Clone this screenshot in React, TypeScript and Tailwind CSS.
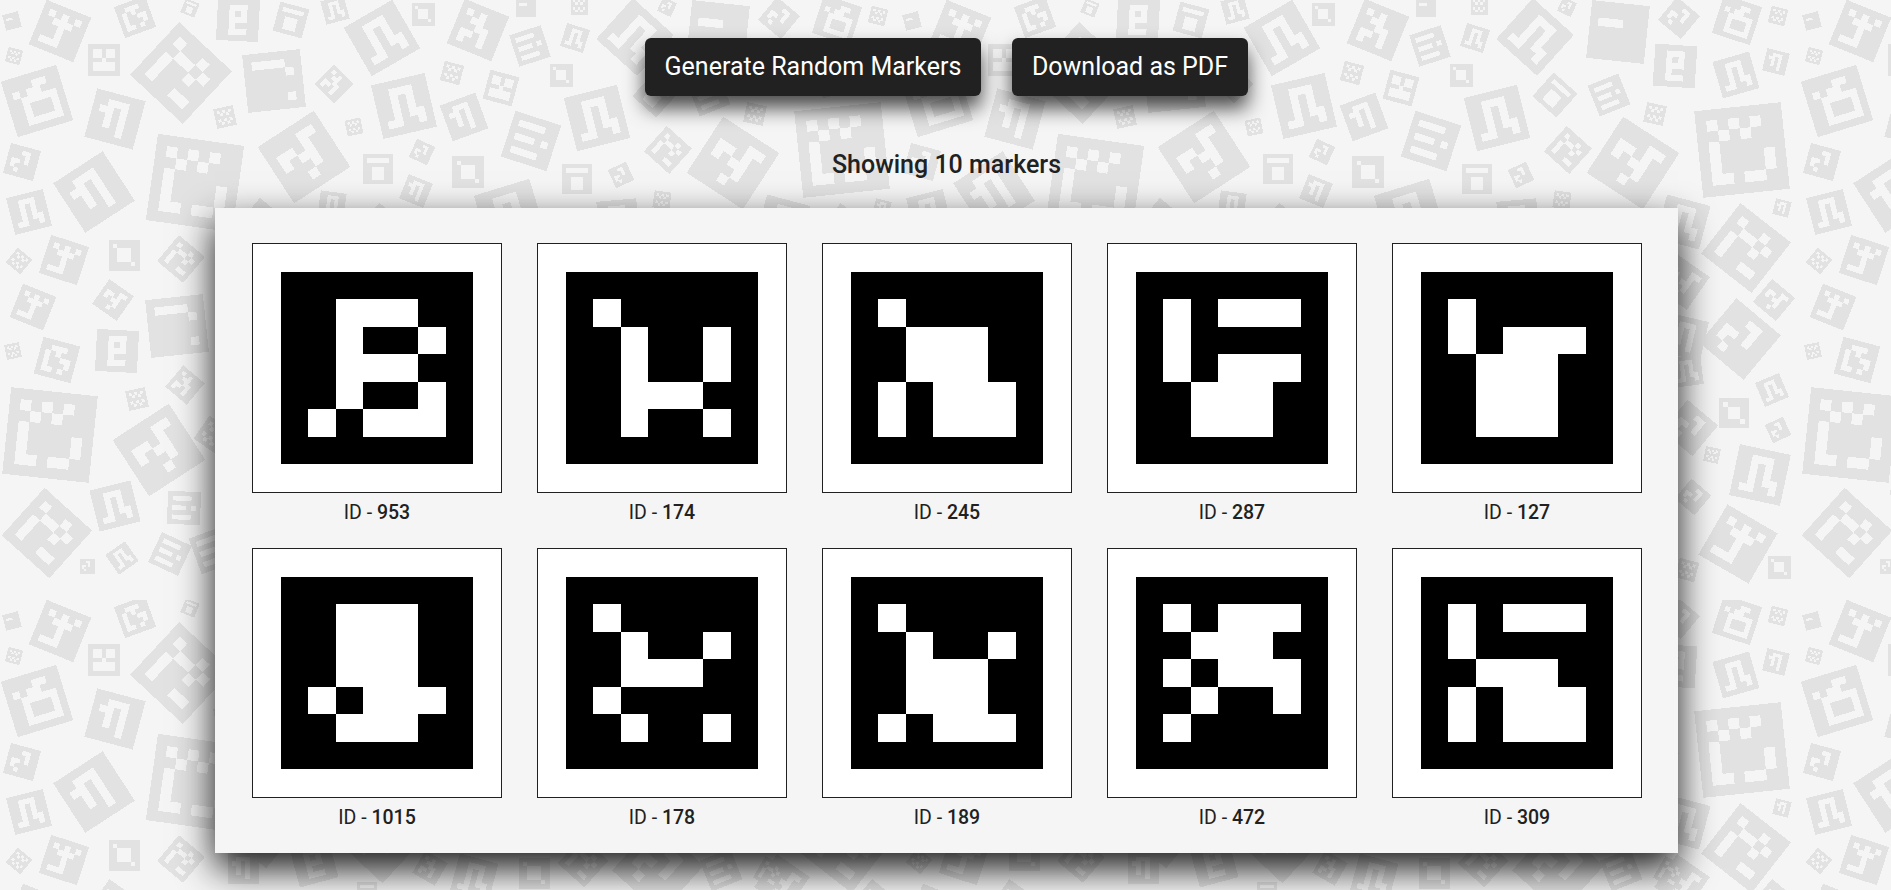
const fontRoboto = "font-['Roboto',sans-serif]";

// printed markers, rows of 5x5 cells, 1 = white
const markers = [
  { id: 953, rows: ['01110', '01001', '01110', '01001', '10111'] },
  { id: 174, rows: ['10000', '01001', '01001', '01110', '01001'] },
  { id: 245, rows: ['10000', '01110', '01110', '10111', '10111'] },
  { id: 287, rows: ['10111', '10000', '10111', '01110', '01110'] },
  { id: 127, rows: ['10000', '10111', '01110', '01110', '01110'] },
  { id: 1015, rows: ['01110', '01110', '01110', '10111', '01110'] },
  { id: 178, rows: ['10000', '01001', '01110', '10000', '01001'] },
  { id: 189, rows: ['10000', '01001', '01110', '01110', '10111'] },
  { id: 472, rows: ['10111', '01110', '10111', '01001', '10000'] },
  { id: 309, rows: ['10111', '10000', '01110', '10111', '10111'] },
];

const P = {
  tee: '10101/01110/00100/00100/11100',
  fork: '01110/10100/10011/10001/11010',
  hash: '01110/01010/01010/01011/11001',
  blob: '01110/01010/01110/01000/01110',
  net: '10010/01101/10010/10000/10011',
  slab: '11110/00001/00000/00000/00001',
  ring: '000110/101100/011111/010001/010001/011111',
  twin: '01110/11010/01010/01010/00010',
  flag: '00011/11010/10110/00010/00100',
  box: '11111/00000/01110/01110/01110',
  core: '10000/01110/01110/01110/00001',
  cross: '11011/11011/00100/11111/11111',
  bars: '11110/00000/11101/00000/11110',
  dots: '10101/01010/00000/10101/01010',
  big: '101010/010100/100000/100001/100001/110110',
  steps: '10100/01100/00110/11010/10010',
  mono: '00000/11100/00000/00000/00000',
  solo: '00110/00010/11010/10000/01000',
};

// background tile, 900x600: cx, cy, size, rotation, pattern
const tile: [number, number, number, number, string][] = [
  [12, 21, 16, -15, P.mono], [60, 31, 48, 22, P.tee], [135, 17, 33, -20, P.fork], [190, 8, 15, 22, P.box],
  [238, 20, 42, 3, P.blob], [291, 20, 30, 15, P.box], [335, 10, 24, -15, P.hash], [382, 38, 56, -30, P.hash],
  [423, 14, 23, 0, P.core], [478, 30, 48, 22, P.steps], [526, 7, 20, 0, P.mono], [579, 6, 17, 0, P.dots],
  [14, 56, 15, 15, P.dots], [104, 60, 32, 0, P.cross], [181, 73, 72, 43, P.net], [274, 81, 58, -6, P.slab],
  [334, 84, 28, 45, P.steps], [404, 106, 55, -13, P.hash], [452, 73, 20, 15, P.dots], [501, 88, 30, 15, P.cross],
  [530, 46, 33, -18, P.bars], [575, 38, 24, 18, P.hash], [561, 75, 23, 0, P.core], [597, 118, 55, -14, P.hash],
  [464, 117, 38, -20, P.twin], [531, 141, 48, 18, P.bars], [37, 101, 58, -17, P.ring], [115, 119, 50, 15, P.twin],
  [225, 117, 20, -12, P.dots], [354, 127, 16, -12, P.dots], [304, 157, 67, -33, P.flag], [22, 162, 31, 15, P.solo],
  [195, 183, 87, 8, P.big], [94, 192, 59, -33, P.twin], [29, 212, 38, -14, P.hash], [64, 260, 40, 18, P.tee],
  [124, 255, 31, 0, P.core], [181, 259, 34, 40, P.net], [19, 261, 19, 40, P.dots], [378, 169, 30, 0, P.box],
  [422, 152, 20, 25, P.solo], [468, 172, 32, 0, P.core], [416, 191, 26, 22, P.twin], [577, 179, 30, 0, P.box],
  [621, 175, 20, -25, P.solo], [332, 205, 26, 8, P.hash], [510, 215, 58, -17, P.hash], [263, 233, 50, 40, P.flag],
  [618, 220, 40, -5, P.hash],
  [635, 37, 55, 42, P.hash], [655, 95, 32, 42, P.box], [667, 7, 15, 25, P.solo], [718, 32, 58, 6, P.mono],
  [779, 18, 30, 40, P.solo], [837, 20, 40, 18, P.ring], [878, 16, 17, 15, P.dots], [775, 66, 42, 4, P.blob],
  [836, 75, 38, -16, P.hash], [876, 62, 23, 14, P.twin], [709, 95, 33, -22, P.bars], [755, 114, 20, 12, P.dots],
  [733, 163, 67, 33, P.flag], [668, 150, 34, 42, P.net], [842, 150, 87, -6, P.big], [846, 248, 64, 38, P.net],
  [882, 208, 16, 14, P.twin], [783, 222, 45, 15, P.hash], [662, 200, 17, 8, P.dots],
  // lower left column
  [33, 307, 36, 22, P.tee], [113, 300, 30, 35, P.flag], [177, 326, 58, -6, P.slab], [13, 351, 15, -12, P.dots],
  [57, 360, 38, 15, P.fork], [117, 351, 42, 3, P.blob], [185, 385, 28, 40, P.steps], [137, 399, 20, -12, P.dots],
  [50, 435, 87, 6, P.big], [159, 450, 67, -33, P.flag], [115, 506, 42, -14, P.hash], [184, 508, 33, 3, P.bars],
  [47, 533, 64, 42, P.net], [87, 566, 15, 0, P.solo], [122, 558, 24, -35, P.hash], [170, 554, 33, 25, P.bars],
  [213, 550, 38, -20, P.bars], [213, 435, 28, 35, P.dots],
  // right column
  [840, 339, 58, 40, P.solo], [872, 390, 26, -23, P.hash], [878, 430, 20, -25, P.solo], [834, 413, 30, 0, P.core],
  [812, 455, 15, 12, P.dots], [860, 475, 52, 12, P.hash], [785, 337, 40, 13, P.twin], [787, 371, 30, -8, P.hash],
  [790, 428, 40, 40, P.solo], [793, 497, 26, 40, P.solo], [838, 544, 58, 30, P.tee], [879, 567, 23, 0, P.core],
  [787, 570, 20, 15, P.dots], [782, 282, 40, 35, P.flag],
  // strip below the card
  [243, 268, 31, 0, P.twin], [314, 263, 40, -15, P.blob], [381, 243, 57, 43, P.solo], [430, 268, 26, 30, P.steps],
  [474, 278, 40, 15, P.hash], [534, 273, 31, 0, P.core], [583, 262, 36, 42, P.net], [658, 268, 65, 42, P.solo],
  [721, 270, 33, -22, P.bars], [770, 273, 25, 30, P.net], [367, 292, 20, 0, P.box], [874, 300, 30, 40, P.flag],
];

function TileMarker({ m }: { m: [number, number, number, number, string] }) {
  const [cx, cy, size, rot, pattern] = m;
  const rows = pattern.split('/');
  const n = rows.length + 2;
  const c = size / n;
  const x0 = -size / 2;
  return (
    <g transform={`translate(${cx} ${cy}) rotate(${rot})`}>
      <rect x={x0} y={x0} width={size} height={size} fill="#e2e2e2" />
      {rows.map((row, r) =>
        row.split('').map((v, k) =>
          v === '1' ? (
            <rect key={`${r}-${k}`} x={x0 + c * (k + 1)} y={x0 + c * (r + 1)} width={c} height={c} fill="#f5f5f5" />
          ) : null
        )
      )}
    </g>
  );
}

function Background() {
  return (
    <svg className="absolute inset-0 w-full h-full" shapeRendering="crispEdges">
      <defs>
        <pattern id="tile" width="900" height="600" patternUnits="userSpaceOnUse">
          {/* drawn again shifted so that markers on the seam wrap round */}
          {[-900, 0, 900].map((dx) =>
            [-600, 0].map((dy) => (
              <g key={`${dx}-${dy}`} transform={`translate(${dx} ${dy})`}>
                {tile.map((m, i) => (
                  <TileMarker key={i} m={m} />
                ))}
              </g>
            ))
          )}
        </pattern>
      </defs>
      <rect width="100%" height="100%" fill="url(#tile)" />
    </svg>
  );
}

function MarkerCard({ id, rows }: { id: number; rows: string[] }) {
  return (
    <div className="flex flex-col items-center">
      <div className="w-[250px] h-[250px] border border-[#212121] bg-white">
        <svg viewBox="0 0 9 9" className="block w-full h-full" shapeRendering="crispEdges">
          <rect x="1" y="1" width="7" height="7" fill="#000" />
          {rows.map((row, r) =>
            row.split('').map((v, k) =>
              v === '1' ? <rect key={`${r}-${k}`} x={k + 2} y={r + 2} width="1" height="1" fill="#fff" /> : null
            )
          )}
        </svg>
      </div>
      <p className="mt-[5px] h-[30px] leading-[30px] text-[19.5px] text-[#212121]">
        ID - <span className="font-medium">{id}</span>
      </p>
    </div>
  );
}

export default function App() {
  return (
    <div className={`relative h-screen overflow-hidden bg-[#f5f5f5] ${fontRoboto}`}>
      <Background />
      <div className="relative flex flex-col items-center pt-[38px] pl-[2px]">
        <div className="flex gap-[31px]">
          <button className="h-[58px] w-[336px] rounded-[6px] bg-[#212121] text-[25px] text-white shadow-[0_12px_20px_rgba(0,0,0,0.7)]">
            Generate Random Markers
          </button>
          <button className="h-[58px] w-[236px] rounded-[6px] bg-[#212121] text-[25px] text-white shadow-[0_12px_20px_rgba(0,0,0,0.7)]">
            Download as PDF
          </button>
        </div>
        <h2 className="mt-[50px] h-[38px] leading-[38px] text-[25px] font-medium text-[#212121]">Showing 10 markers</h2>
        <div className="mt-[24px] w-[1463px] h-[645px] bg-[#f5f5f5] pt-[35px] pl-[19.5px] pr-[18.5px] shadow-[0_15px_35px_rgba(0,0,0,0.9)]">
          <div className="grid grid-cols-5 gap-y-[20px]">
            {markers.map((m) => (
              <MarkerCard key={m.id} id={m.id} rows={m.rows} />
            ))}
          </div>
        </div>
      </div>
    </div>
  );
}
